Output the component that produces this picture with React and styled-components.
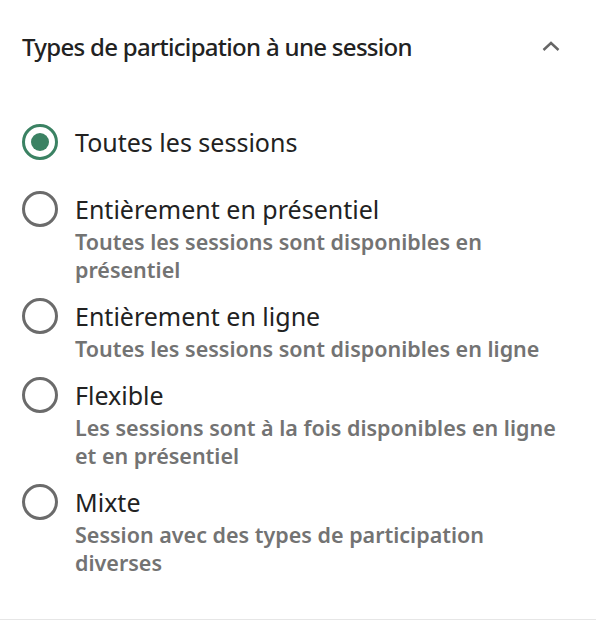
import { useState } from 'react';
import styled, { createGlobalStyle } from 'styled-components';

const GlobalStyle = createGlobalStyle`
  body {
    margin: 0;
    background: #fff;
    font-family: "Noto Sans", "Open Sans", sans-serif;
  }
`;

const Panel = styled.section`
  width: 596px;
  height: 620px;
  box-sizing: border-box;
  border-bottom: 1px solid #e6e6e6;
  padding: 0 22px;
`;

const Header = styled.div`
  display: flex;
  align-items: center;
  justify-content: space-between;
  height: 92px;
`;

const Title = styled.h2`
  margin: 0;
  font-size: 24px;
  letter-spacing: -0.7px;
  font-weight: 500;
  color: #222;
`;

const Toggle = styled.button`
  border: 0;
  background: none;
  padding: 0;
  margin-right: 14px;
  display: flex;
  cursor: pointer;
`;

const Options = styled.div`
  display: flex;
  flex-direction: column;
  margin-top: 32px;
`;

const Option = styled.label`
  display: flex;
  gap: 17px;
  cursor: pointer;
  margin-bottom: ${(p) => (p.$spaced ? '31px' : '14px')};
`;

const Radio = styled.span`
  flex: none;
  width: 36px;
  height: 36px;
  box-sizing: border-box;
  border-radius: 50%;
  border: 3px solid ${(p) => (p.$checked ? '#3b8263' : '#6b6b6b')};
  display: flex;
  align-items: center;
  justify-content: center;

  &::after {
    content: '';
    width: 18px;
    height: 18px;
    border-radius: 50%;
    background: #3b8263;
    display: ${(p) => (p.$checked ? 'block' : 'none')};
  }
`;

const Text = styled.div`
  display: flex;
  flex-direction: column;
  padding-right: 6px;
`;

const Label = styled.span`
  font-size: 25px;
  line-height: 36px;
  color: #222;
`;

const Hint = styled.span`
  font-size: 21.5px;
  line-height: 28px;
  font-weight: 600;
  color: #737373;
  margin-top: 1px;
`;

const options = [
  { id: 'all', label: 'Toutes les sessions' },
  {
    id: 'presentiel',
    label: 'Entièrement en présentiel',
    hint: 'Toutes les sessions sont disponibles en présentiel',
  },
  {
    id: 'ligne',
    label: 'Entièrement en ligne',
    hint: 'Toutes les sessions sont disponibles en ligne',
  },
  {
    id: 'flexible',
    label: 'Flexible',
    hint: 'Les sessions sont à la fois disponibles en ligne et en présentiel',
  },
  {
    id: 'mixte',
    label: 'Mixte',
    hint: 'Session avec des types de participation diverses',
  },
];

export default function App() {
  const [value, setValue] = useState('all');

  return (
    <>
      <GlobalStyle />
      <Panel>
        <Header>
          <Title>Types de participation à une session</Title>
          <Toggle aria-label="Réduire">
            <svg width="18" height="10" viewBox="0 0 18 10" fill="none">
              <path d="M1.5 9L9 2l7.5 7" stroke="#666" strokeWidth="2.4" />
            </svg>
          </Toggle>
        </Header>
        <Options>
          {options.map((o) => (
            <Option key={o.id} $spaced={!o.hint} onClick={() => setValue(o.id)}>
              <Radio $checked={value === o.id} />
              <Text>
                <Label>{o.label}</Label>
                {o.hint && <Hint>{o.hint}</Hint>}
              </Text>
            </Option>
          ))}
        </Options>
      </Panel>
    </>
  );
}
